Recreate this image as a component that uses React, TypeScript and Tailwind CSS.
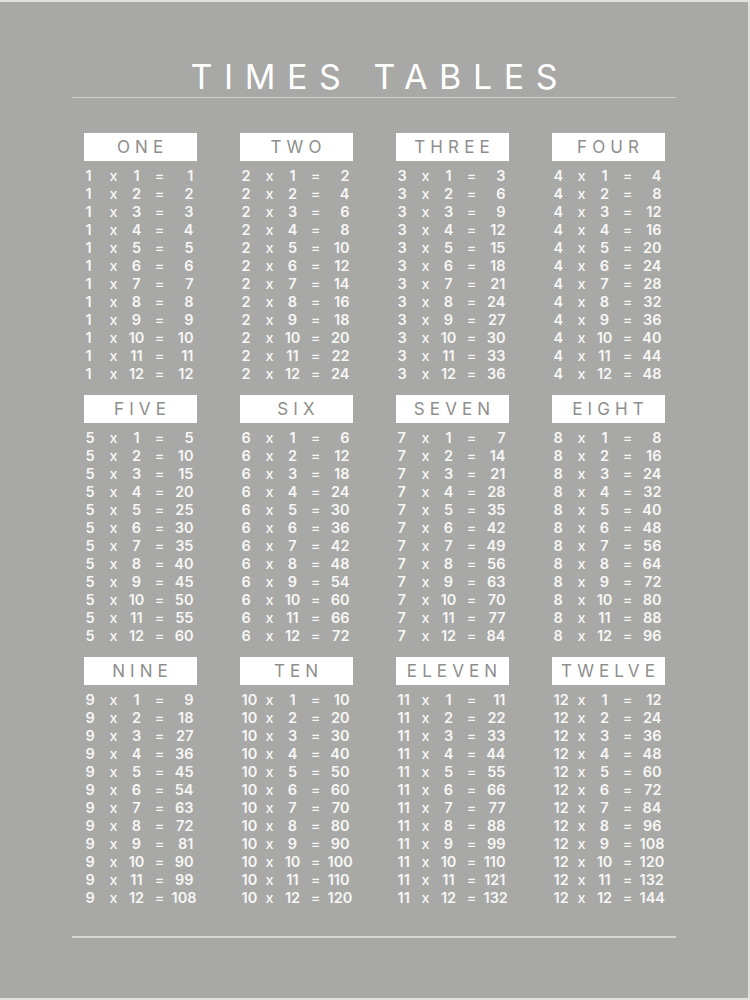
const NAMES = [
  'ONE', 'TWO', 'THREE', 'FOUR',
  'FIVE', 'SIX', 'SEVEN', 'EIGHT',
  'NINE', 'TEN', 'ELEVEN', 'TWELVE',
];

function Table({ n, name }: { n: number; name: string }) {
  return (
    <div>
      <div className="h-[28px] bg-white flex items-center justify-center">
        <span className="text-[17px] font-normal tracking-[0.3em] pl-[0.3em] text-[#8e8e8c] leading-none">
          {name}
        </span>
      </div>
      <div className="mt-[6px]">
        {Array.from({ length: 12 }, (_, i) => i + 1).map((m) => (
          <div
            key={m}
            className="grid grid-cols-[18px_24px_22px_24px_25px] h-[18px] items-center text-[14.5px] font-semibold leading-none text-[#f7f7f5]"
          >
            <span className="pl-[2px] whitespace-nowrap">{n}</span>
            <span className="text-center font-medium">x</span>
            <span className="text-center">{m}</span>
            <span className="text-center font-medium">=</span>
            <span className="text-right pr-[3px]">{n * m}</span>
          </div>
        ))}
      </div>
    </div>
  );
}

export default function App() {
  return (
    <div
      className="w-[750px] h-[1000px] bg-[#a8a8a6] border-t-2 border-r-2 border-b-2 border-[#e2e2e0] flex flex-col"
      style={{ fontFamily: 'Inter, "Noto Sans", sans-serif' }}
    >
      <div className="w-[604px] mx-auto pt-[55px]">
        {/* Title */}
        <h1 className="text-center text-[34px] leading-[40px] font-normal tracking-[0.34em] pl-[0.34em] text-white">
          TIMES TABLES
        </h1>
        <div className="h-px bg-[#cfcfcd]" />

        {/* Tables */}
        <div className="w-[581px] mx-auto mt-[35px] grid grid-cols-4 gap-x-[43px] gap-y-[12px]">
          {NAMES.map((name, i) => (
            <Table key={name} n={i + 1} name={name} />
          ))}
        </div>

        <div className="h-[2px] bg-[#d6d6d4] mt-[29px]" />
      </div>
    </div>
  );
}
